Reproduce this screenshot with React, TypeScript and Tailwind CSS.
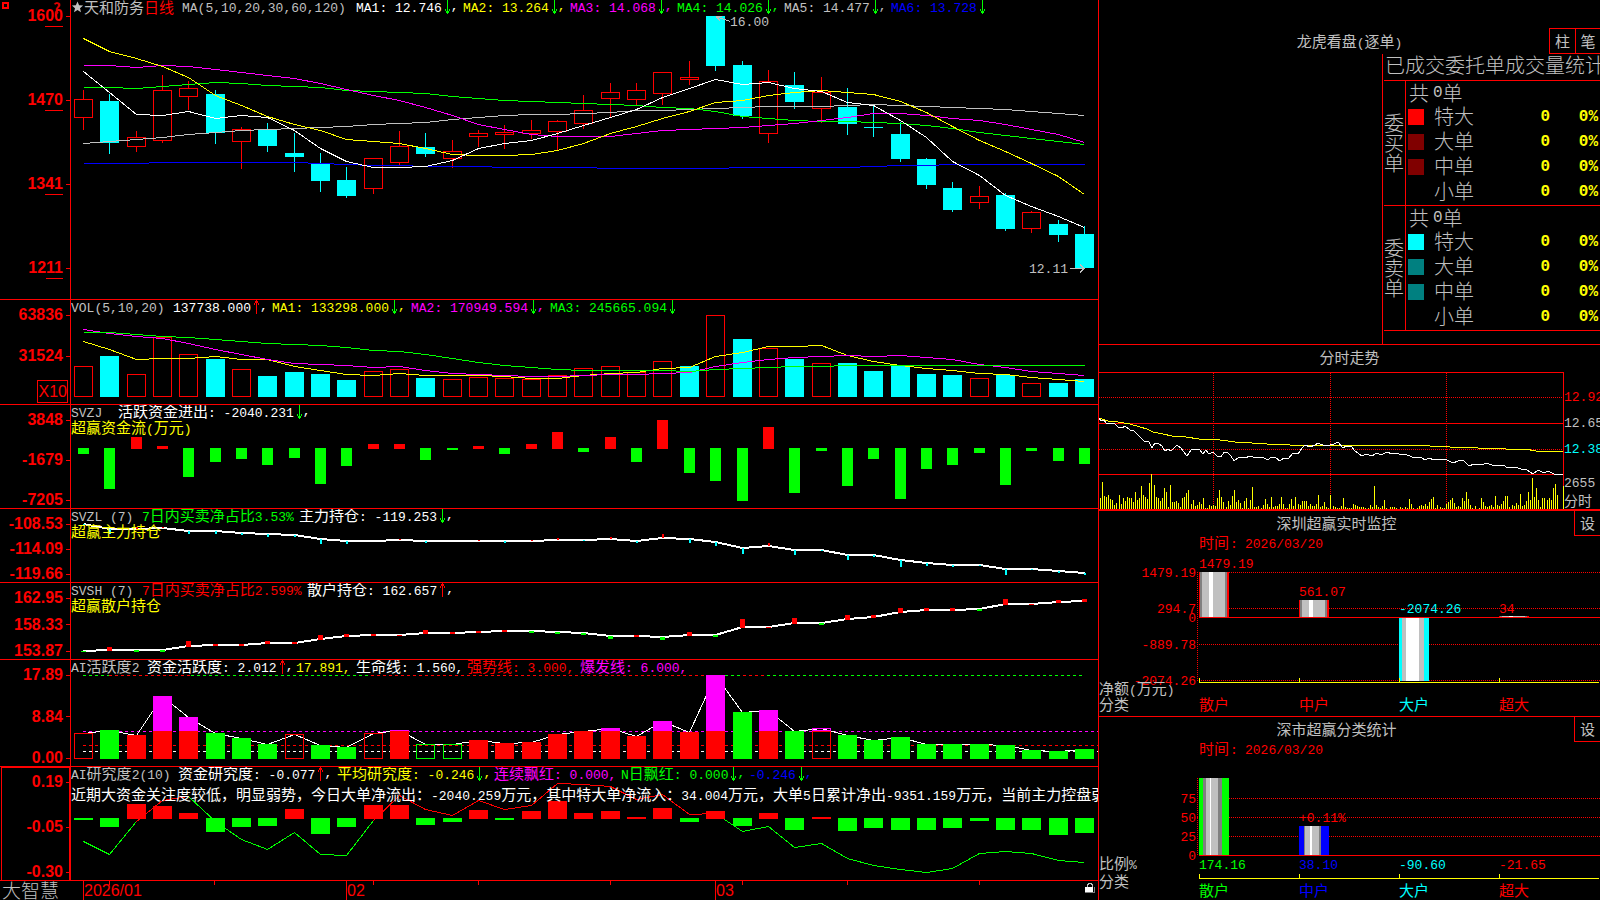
import type { ReactNode } from 'react'

type Bar = [kind: string, high: number, top: number, bottom: number, low: number]

const RED = '#ff0000'
const GREEN = '#00ff00'
const CYAN = '#00ffff'
const YELLOW = '#ffff00'
const MAGENTA = '#ff00ff'
const BLUE = '#0000ff'
const WHITE = '#ffffff'
const GRAY = '#c0c0c0'

// r = rising (hollow red), c = falling (solid cyan)
const CANDLES: Bar[] = [
  ['r', 90, 99, 117, 130], ['c', 94, 101, 143, 154], ['r', 131, 137, 146, 152], ['r', 75, 90, 140, 143],
  ['r', 81, 88, 96, 110], ['c', 90, 94, 133, 144], ['r', 127, 129, 141, 169], ['c', 123, 129, 146, 152],
  ['c', 133, 153, 157, 172], ['c', 153, 163, 181, 192], ['c', 167, 180, 196, 198], ['r', 158, 158, 188, 194],
  ['r', 131, 146, 162, 165], ['c', 133, 147, 154, 157], ['r', 140, 151, 158, 168], ['r', 130, 133, 136, 147],
  ['r', 125, 132, 134, 149], ['r', 120, 130, 133, 139], ['r', 120, 121, 131, 150], ['r', 95, 110, 123, 129],
  ['r', 83, 92, 98, 117], ['r', 83, 90, 99, 105], ['r', 72, 72, 93, 105], ['r', 61, 77, 79, 85],
  ['c', 16, 16, 66, 71], ['c', 61, 65, 116, 119], ['r', 70, 81, 133, 143], ['c', 72, 85, 102, 109],
  ['r', 77, 92, 108, 123], ['c', 88, 107, 124, 135], ['c', 105, 127, 128, 137], ['c', 122, 134, 159, 162],
  ['c', 158, 159, 185, 189], ['c', 182, 188, 210, 212], ['r', 186, 196, 202, 209], ['c', 193, 195, 229, 231],
  ['r', 211, 212, 228, 233], ['c', 220, 224, 235, 242], ['c', 226, 234, 268, 268],
]

const PRICE_LINES: [string, number[]][] = [
  [GRAY, [143, 141, 139, 137, 134, 132, 130, 129, 128, 127, 126, 124, 123, 122, 119, 117, 115, 114, 114, 113, 112, 110, 110, 109, 108, 107, 106, 106, 106, 105, 104, 105, 106, 107, 108, 109, 111, 113, 115]],
  [BLUE, [163, 163, 163, 162, 162, 162, 162, 162, 162, 163, 164, 165, 165, 166, 166, 166, 167, 167, 167, 167, 168, 168, 168, 168, 168, 167, 167, 167, 167, 167, 166, 165, 165, 164, 164, 164, 164, 164, 164]],
  [GREEN, [87, 87, 88, 86, 84, 82, 83, 85, 86, 87, 90, 91, 92, 93, 96, 98, 100, 101, 102, 103, 104, 105, 107, 108, 111, 116, 118, 120, 121, 121, 122, 123, 125, 128, 132, 135, 138, 141, 144]],
  [MAGENTA, [65, 65, 67, 65, 66, 69, 72, 75, 78, 83, 89, 95, 100, 107, 115, 124, 129, 134, 136, 136, 136, 133, 130, 129, 128, 127, 125, 123, 120, 117, 113, 113, 115, 118, 120, 124, 129, 134, 142]],
  [YELLOW, [38, 51, 58, 66, 77, 95, 105, 116, 124, 130, 139, 141, 143, 148, 154, 155, 155, 154, 150, 143, 133, 126, 118, 111, 102, 100, 95, 92, 90, 92, 94, 101, 112, 126, 140, 151, 163, 176, 194]],
  [WHITE, [71, 92, 114, 115, 111, 118, 115, 117, 130, 148, 161, 167, 167, 166, 160, 148, 143, 140, 133, 125, 117, 109, 97, 88, 79, 84, 82, 88, 91, 102, 105, 120, 137, 161, 175, 195, 206, 216, 227]],
]

const VOLUME_TOPS = [366, 356, 374, 337, 354, 359, 369, 376, 372, 374, 380, 371, 369, 378, 379, 377, 378, 379, 375, 368, 366, 372, 361, 366, 315, 339, 348, 359, 363, 363, 371, 366, 374, 375, 378, 375, 383, 383, 379]
const VOLUME_UP = 'r.rrr.r....rr.rrrrrrrrr.r.r.r.....r.r..'

const VOLUME_LINES: [string, number[]][] = [
  [YELLOW, [341, 349, 359, 358, 358, 356, 359, 359, 366, 370, 374, 375, 373, 375, 375, 375, 376, 378, 378, 375, 373, 372, 368, 367, 356, 352, 346, 346, 345, 355, 361, 365, 368, 370, 373, 374, 377, 379, 381]],
  [MAGENTA, [329, 333, 336, 338, 343, 349, 354, 359, 363, 364, 365, 367, 366, 370, 373, 374, 375, 376, 376, 375, 374, 374, 373, 372, 366, 362, 359, 357, 356, 355, 356, 355, 357, 359, 364, 367, 371, 373, 375]],
  [GREEN, [332, 332, 334, 336, 337, 339, 341, 343, 344, 345, 347, 350, 351, 354, 358, 362, 365, 367, 369, 370, 370, 370, 370, 371, 369, 368, 367, 366, 366, 365, 365, 365, 365, 365, 365, 365, 365, 365, 365]],
]

// y end of every bar; above the zero line is an inflow
const FUND_FLOW = [454, 489, 437, 446, 477, 462, 459, 465, 458, 484, 466, 444, 444, 460, 450, 446, 454, 444, 432, 452, 437, 462, 420, 473, 481, 501, 427, 493, 451, 486, 459, 499, 469, 465, 453, 485, 451, 461, 464]

const MAIN_LINE = [524, 529, 529, 528, 531, 531, 533, 534, 535, 539, 541, 541, 540, 541, 541, 541, 541, 541, 540, 540, 539, 541, 538, 539, 542, 548, 546, 550, 550, 555, 555, 560, 563, 565, 565, 569, 569, 571, 573]
const MAIN_TICKS = [-1, 5, 2, 1, 3, 3, 2, 3, 2, 5, 3, 0, 1, 2, 0, 1, 2, 1, 2, -1, 2, -2, 4, -4, -4, -6, 3, -5, -1, -5, -2, -7, -3, -2, -1, -6, -1, -2, -2]
const MAIN_UP = [2, 3, 12, 15, 17, 18, 20, 22, 26]

const RETAIL_LINE = [651, 650, 650, 650, 646, 645, 645, 643, 643, 639, 636, 635, 635, 633, 633, 632, 631, 631, 632, 633, 636, 636, 637, 635, 635, 627, 627, 623, 623, 619, 617, 612, 610, 610, 609, 604, 604, 602, 601]
const RETAIL_MARKS = [-1, 4, -2, -2, 6, 2, 2, 3, 2, 5, 3, 2, 1, 4, 2, 2, 2, -2, -2, -2, -3, 2, -3, 4, -2, 9, 1, 6, -2, 5, 3, 5, 3, 3, -2, 6, 1, 3, 3]

// g/R solid, r/o hollow
const ACTIVITY: [string, number][] = [
  ['r', 733], ['g', 730], ['R', 735], ['R', 696], ['R', 717], ['g', 733], ['g', 738], ['g', 744], ['r', 734], ['g', 745],
  ['g', 747], ['r', 733], ['R', 730], ['o', 744], ['o', 744], ['R', 740], ['R', 743], ['R', 742], ['R', 734], ['R', 731],
  ['R', 728], ['R', 736], ['R', 721], ['R', 732], ['R', 675], ['g', 712], ['R', 710], ['g', 731], ['r', 728], ['g', 735],
  ['g', 740], ['g', 737], ['g', 744], ['g', 744], ['g', 744], ['g', 745], ['g', 750], ['g', 751], ['g', 749],
]

const RESEARCH_BARS = [820, 827, 804, 806, 813, 832, 827, 826, 809, 834, 827, 805, 805, 825, 822, 810, 820, 811, 801, 813, 811, 817, 808, 822, 811, 826, 813, 830, 817, 831, 828, 830, 830, 828, 821, 830, 830, 835, 833]
const RESEARCH_LINE = [841, 854, 821, 800, 796, 821, 839, 849, 832, 854, 855, 820, 795, 809, 815, 800, 809, 805, 783, 784, 786, 799, 794, 814, 813, 831, 826, 847, 843, 858, 865, 869, 872, 868, 853, 851, 853, 860, 862]

const TICK_VOLUME = [
  11, 27, 13, 12, 14, 10, 9, 4, 6, 14, 5, 11, 8, 12, 11, 11, 7, 17, 9, 11, 23, 14, 12, 10, 26, 35, 24, 12, 11, 8, 11, 21, 17, 2, 24, 7, 7, 8, 6,
  2, 11, 12, 16, 19, 5, 9, 3, 4, 7, 5, 11, 1, 1, 4, 3, 4, 3, 11, 19, 12, 7, 2, 8, 4, 13, 19, 7, 9, 6, 1, 8, 11, 1, 9, 22, 2, 2, 3, 1,
  4, 10, 5, 2, 12, 2, 3, 3, 5, 12, 5, 1, 1, 5, 10, 3, 12, 5, 4, 8, 8, 8, 3, 5, 3, 3, 5, 14, 2, 3, 7, 2, 1, 14, 3, 2, 1, 1, 3, 11,
  2, 1, 1, 1, 5, 4, 3, 2, 2, 2, 1, 1, 4, 2, 23, 4, 2, 1, 3, 9, 1, 0, 2, 2, 2, 1, 0, 2, 1, 2, 1, 10, 5, 1, 0, 1, 3, 4, 3, 5,
  3, 7, 10, 12, 1, 4, 2, 1, 1, 5, 7, 9, 11, 6, 2, 3, 2, 11, 8, 17, 10, 4, 1, 3, 0, 1, 11, 7, 3, 2, 3, 4, 2, 13, 4, 3, 5, 8, 13, 13,
  2, 4, 3, 6, 4, 15, 3, 4, 8, 17, 9, 31, 12, 21, 9, 2, 11, 11, 9, 11, 9, 21, 25, 14, 0, 0, 23,
]
const TICK_STEP = 463 / (TICK_VOLUME.length - 1)

const PRICE_PATH =
  '1099,418 1101,421 1104,420 1107,424 1114,423 1118,427 1122,428 1125,426 1130,430 1134,431 1139,436 1144,441 1149,442 1152,448 1155,443 1158,443 1162,446 1165,451 1168,449 1171,451 1177,445 1181,448 1187,456 1191,450 1199,449 1203,454 1206,450 1209,454 1213,452 1217,456 1221,457 1224,452 1228,453 1231,456 1234,461 1239,457 1246,458 1249,456 1253,457 1263,457 1267,460 1272,457 1276,458 1280,461 1284,458 1288,459 1293,453 1298,454 1302,448 1305,445 1310,447 1315,445 1318,443 1325,446 1330,445 1334,444 1338,442 1343,448 1346,446 1351,446 1355,451 1362,456 1366,454 1372,456 1377,453 1381,455 1387,452 1392,454 1397,453 1401,455 1405,454 1412,457 1421,457 1425,460 1429,458 1434,460 1440,459 1447,460 1453,463 1458,461 1463,460 1469,466 1474,464 1481,465 1487,463 1494,466 1503,465 1508,468 1515,467 1521,469 1527,470 1533,474 1538,470 1544,473 1548,471 1554,474 1563,474'
const AVERAGE_PATH =
  '1099,418 1108,421 1118,422 1130,424 1140,427 1147,429 1153,432 1163,434 1172,436 1186,437 1199,439 1213,439 1235,442 1252,443 1267,444 1290,445 1400,445 1430,446 1450,447 1478,448 1506,449 1525,449 1536,451 1550,451 1563,452'

// left pixel of the column in the middle of candle i
const cx = (i: number) => Math.round(83 + i * 26.34)

function Line({ ys, color, width = 1 }: { ys: number[]; color: string; width?: number }) {
  // odd widths sit on pixel centres, even ones on pixel edges
  const dy = width % 2 ? 0.5 : 0
  return <polyline points={ys.map((y, i) => `${cx(i) + 0.5},${y + dy}`).join(' ')} fill="none" stroke={color} strokeWidth={width} />
}

function Box({ x, y, w, h, color, hollow }: { x: number; y: number; w: number; h: number; color: string; hollow?: boolean }) {
  return hollow
    ? <rect x={x + 0.5} y={y + 0.5} width={w - 1} height={Math.max(h - 1, 1)} fill="none" stroke={color} />
    : <rect x={x} y={y} width={w} height={h} fill={color} />
}

// Latin runs are set in the half-width mono face, the rest in the CJK face
function Mixed({ children }: { children: string }) {
  return (
    <>
      {children.split(/([\x20-\x7e]+)/).filter(Boolean).map((part, i) => (
        /^[\x20-\x7e]/.test(part)
          ? <span key={i} className="font-['Liberation_Mono',monospace] text-[13px] whitespace-pre">{part}</span>
          : <span key={i}>{part}</span>
      ))}
    </>
  )
}

function Arrow({ up }: { up?: boolean }) {
  return (
    <svg width="7" height="14" viewBox="0 0 7 14" className="ml-[2px] shrink-0" shapeRendering="crispEdges">
      {up
        ? <path d="M3.500 14V0M1.500 3v2M2.500 1v2M4.500 1v2M5.500 3v2" stroke={RED} fill="none" />
        : <path d="M3.500 0v14M1.500 9v2M2.500 11v2M4.500 11v2M5.500 9v2" stroke={GREEN} fill="none" />}
    </svg>
  )
}

interface ItemProps { className: string; text: string; arrow?: 'up' | 'down'; comma?: boolean }

function Item({ className, text, arrow, comma }: ItemProps) {
  return (
    <span className={`flex shrink-0 items-center ${className}`}>
      <span><Mixed>{text}</Mixed></span>
      {arrow && <Arrow up={arrow === 'up'} />}
      {comma && <Mixed>,</Mixed>}
    </span>
  )
}

interface PanelProps {
  top: number
  height: number
  className: string
  axis: ReactNode
  legend: ReactNode
  children: ReactNode
}

function Panel({ top, height, className, axis, legend, children }: PanelProps) {
  return (
    <section className={`flex border-b border-[#ff0000] ${className}`}>
      {axis}
      <div className="relative min-w-0 flex-1 overflow-hidden">
        <svg
          className="absolute inset-0 h-full w-full"
          viewBox={`71 ${top} 1027 ${height}`}
          preserveAspectRatio="none"
          shapeRendering="crispEdges"
        >
          {children}
        </svg>
        <div className="relative">{legend}</div>
      </div>
    </section>
  )
}

function Axis({ labels }: { labels: string[] }) {
  return (
    <div className="flex w-[71px] shrink-0 flex-col justify-between border-r border-[#ff0000] pt-[7px]">
      {labels.map((l) => <AxisLabel key={l}>{l}</AxisLabel>)}
    </div>
  )
}

function AxisLabel({ children }: { children: ReactNode }) {
  return (
    <div className="flex items-center justify-end gap-[3px] font-['Liberation_Sans',sans-serif] text-base leading-4 font-bold text-[#ff0000]">
      <span>{children}</span>
      <i className="h-px w-1 bg-[#ff0000]" />
    </div>
  )
}

function PricePanel() {
  return (
    <Panel
      top={0}
      height={299}
      className="h-[300px]"
      axis={
        <div className="relative flex w-[71px] shrink-0 flex-col justify-between border-r border-[#ff0000] pt-2 pb-[23px]">
          <i className="absolute top-[2px] left-[2px] h-[7px] w-[7px] border-2 border-[#ff0000]" />
          <b className="absolute top-0 left-[53px] z-10 text-[15px] leading-4 text-[#e00000]">?</b>
          {['1600', '1470', '1341', '1211'].map((l) => (
            <AxisLabel key={l}>
              {l.slice(0, 2)}
              <span className="border-b border-[#ff0000] pb-[2px]">{l.slice(2)}</span>
            </AxisLabel>
          ))}
        </div>
      }
      legend={
        <div className="flex h-[14px] items-center leading-[14px]">
          <span className="flex w-[111px] shrink-0 items-center text-[#c0c0c0]">
            <svg width="13" height="12" viewBox="0 0 13 12"><path fill={GRAY} d="M6.500 .5l1.600 3.800 4 .3-3.100 2.600 1 4.100-3.500-2.300L3 11.300l1-4.100L.9 4.600l4-.3z" /></svg>
            天和防务<span className="text-[#ff0000]">日线</span>
          </span>
          <Item className="w-[174px] text-[#c0c0c0]" text="MA(5,10,20,30,60,120)" />
          <Item className="w-[107px] text-white" text="MA1: 12.746" arrow="down" comma />
          <Item className="w-[107px] text-[#ffff00]" text="MA2: 13.264" arrow="down" comma />
          <Item className="w-[107px] text-[#ff00ff]" text="MA3: 14.068" arrow="down" comma />
          <Item className="w-[107px] text-[#00ff00]" text="MA4: 14.026" arrow="down" comma />
          <Item className="w-[107px] text-[#c0c0c0]" text="MA5: 14.477" arrow="down" comma />
          <Item className="w-[107px] text-[#0000ff]" text="MA6: 13.728" arrow="down" />
        </div>
      }
    >
      {CANDLES.map(([kind, high, top, bottom, low], i) => {
        const color = kind === 'r' ? RED : CYAN
        return (
          <g key={i}>
            <rect x={cx(i)} y={high} width={1} height={top - high} fill={color} />
            <rect x={cx(i)} y={bottom} width={1} height={low - bottom} fill={color} />
            <Box x={cx(i) - 9} y={top} w={19} h={bottom - top + (kind === 'r' ? 1 : 0)} color={color} hollow={kind === 'r'} />
          </g>
        )
      })}
      {PRICE_LINES.map(([color, ys]) => <Line key={color} ys={ys} color={color} />)}
      <g stroke={GRAY} fill="none">
        <path d="M716 16.500l14 5M716 16.500l4 4M716 16.500h6" />
        <path d="M1070 268.500h15M1080 264.500l4 4-4 4" />
      </g>
      <g fill={GRAY} className="font-['Liberation_Mono',monospace] text-[13px]">
        <text x="730" y="26">16.00</text>
        <text x="1029" y="273">12.11</text>
      </g>
    </Panel>
  )
}

function VolumePanel() {
  return (
    <Panel
      top={300}
      height={104}
      className="h-[105px]"
      axis={
        <div className="flex w-[71px] shrink-0 flex-col border-r border-[#ff0000] pt-[7px]">
          <AxisLabel>63836</AxisLabel>
          <div className="mt-[25px]"><AxisLabel>31524</AxisLabel></div>
          <div className="mt-4 mr-[2px] flex h-[23px] w-[31px] items-center justify-end self-end border border-[#ff0000] font-['Liberation_Sans',sans-serif] text-base text-[#ff0000]">X10</div>
        </div>
      }
      legend={
        <div className="flex h-[14px] items-center leading-[14px]">
          <Item className="w-[102px] text-[#c0c0c0]" text="VOL(5,10,20)" />
          <Item className="w-[99px] text-white" text="137738.000" arrow="up" comma />
          <Item className="w-[139px] text-[#ffff00]" text="MA1: 133298.000" arrow="down" comma />
          <Item className="w-[139px] text-[#ff00ff]" text="MA2: 170949.594" arrow="down" comma />
          <Item className="w-[139px] text-[#00ff00]" text="MA3: 245665.094" arrow="down" />
        </div>
      }
    >
      {VOLUME_TOPS.map((y, i) => {
        const up = VOLUME_UP[i] === 'r'
        return <Box key={i} x={cx(i) - 9} y={y} w={19} h={397 - y} color={up ? RED : CYAN} hollow={up} />
      })}
      {VOLUME_LINES.map(([color, ys]) => <Line key={color} ys={ys} color={color} />)}
    </Panel>
  )
}

function FundFlowPanel() {
  return (
    <Panel
      top={405}
      height={103}
      className="h-[104px]"
      axis={<Axis labels={['3848', '-1679', '-7205']} />}
      legend={
        <>
          <div className="flex h-[14px] items-center leading-[14px]">
            <Item className="w-[47px] text-[#c0c0c0]" text="SVZJ" />
            <Item className="text-white" text="活跃资金进出: -2040.231" arrow="down" comma />
          </div>
          <div className="leading-[15px] text-[#ffff00]"><Mixed>超赢资金流(万元)</Mixed></div>
        </>
      }
    >
      {FUND_FLOW.map((y, i) => (
        y < 448
          ? <Box key={i} x={cx(i) - 5} y={y} w={11} h={449 - y} color={RED} />
          : <Box key={i} x={cx(i) - 5} y={448} w={11} h={y - 448} color={GREEN} />
      ))}
    </Panel>
  )
}

function MainHoldingPanel() {
  return (
    <Panel
      top={509}
      height={73}
      className="h-[74px]"
      axis={<Axis labels={['-108.53', '-114.09', '-119.66']} />}
      legend={
        <>
          <div className="flex h-[14px] items-center leading-[14px]">
            <Item className="w-[71px] text-[#c0c0c0]" text="SVZL (7)" />
            <Item className="w-[157px] text-[#00ff00]" text="7日内买卖净占比3.53%" />
            <Item className="text-white" text="主力持仓: -119.253" arrow="down" comma />
          </div>
          <div className="leading-[15px] text-[#ffff00]">超赢主力持仓</div>
        </>
      }
    >
      <Line ys={MAIN_LINE} color={WHITE} width={2} />
      {MAIN_TICKS.map((t, i) => {
        const h = Math.abs(t)
        return MAIN_UP.includes(i)
          ? <rect key={i} x={cx(i)} y={MAIN_LINE[i] - h} width={2} height={h} fill={RED} />
          : <rect key={i} x={cx(i)} y={MAIN_LINE[i]} width={2} height={h} fill={CYAN} />
      })}
    </Panel>
  )
}

function RetailHoldingPanel() {
  return (
    <Panel
      top={583}
      height={76}
      className="h-[77px]"
      axis={<Axis labels={['162.95', '158.33', '153.87']} />}
      legend={
        <>
          <div className="flex h-[14px] items-center leading-[14px]">
            <Item className="w-[71px] text-[#c0c0c0]" text="SVSH (7)" />
            <Item className="w-[165px] text-[#ff0000]" text="7日内买卖净占比2.599%" />
            <Item className="text-white" text="散户持仓: 162.657" arrow="up" comma />
          </div>
          <div className="leading-[15px] text-[#ffff00]">超赢散户持仓</div>
        </>
      }
    >
      <Line ys={RETAIL_LINE} color={WHITE} width={2} />
      {RETAIL_MARKS.map((m, i) => (
        m > 0
          ? <rect key={i} x={cx(i) - 2} y={RETAIL_LINE[i] - m + 1} width={5} height={m} fill={RED} />
          : <rect key={i} x={cx(i) - 2} y={RETAIL_LINE[i]} width={5} height={-m} fill={GREEN} />
      ))}
    </Panel>
  )
}

function ActivityPanel() {
  return (
    <Panel
      top={660}
      height={106}
      className="h-[107px]"
      axis={<Axis labels={['17.89', '8.84', '0.00']} />}
      legend={
        <div className="flex h-[14px] items-center leading-[14px]">
          <Item className="w-[76px] text-[#c0c0c0]" text="AI活跃度2" />
          <Item className="w-[149px] text-white" text="资金活跃度: 2.012" arrow="up" comma />
          <Item className="w-[60px] text-[#ffff00]" text="17.891," />
          <Item className="w-[111px] text-white" text="生命线: 1.560," />
          <Item className="w-[113px] text-[#ff0000]" text="强势线: 3.000," />
          <Item className="text-[#ff00ff]" text="爆发线: 6.000," />
        </div>
      }
    >
      <g strokeDasharray="3 3">
        <path d="M83 675.500H109M191 675.500H371M719 675.500H743M767 675.500H1085" stroke={GREEN} />
        <path d="M109 675.500H191M371 675.500H716M743 675.500H767" stroke={RED} />
        <path d="M83 731.500H1098" stroke={MAGENTA} />
        <path d="M83 745.500H1098" stroke={RED} />
        <path d="M83 751.500H1098" stroke={WHITE} />
      </g>
      <Line ys={ACTIVITY.map(([, y]) => y)} color={WHITE} />
      {ACTIVITY.map(([kind, y], i) => {
        const hollow = kind === 'r' || kind === 'o'
        const color = kind === 'g' || kind === 'o' ? GREEN : RED
        const from = color === RED ? Math.max(y, 731) : y
        return (
          <g key={i}>
            <Box x={cx(i) - 9} y={from} w={19} h={759 - from} color={color} hollow={hollow} />
            {from > y && <Box x={cx(i) - 9} y={y} w={19} h={from - y} color={MAGENTA} hollow={hollow} />}
          </g>
        )
      })}
    </Panel>
  )
}

function ResearchPanel() {
  const seg = (from: number, to: number) =>
    RESEARCH_LINE.slice(from, to + 1).map((y, k) => `${cx(from + k) + 0.5},${y + 0.5}`).join(' ')

  return (
    <Panel
      top={767}
      height={113}
      className="h-[114px]"
      axis={
        <div className="flex w-[71px] shrink-0 border-r border-[#ff0000] pl-px">
          <div className="flex flex-1 flex-col justify-between border border-b-0 border-[#ff0000] pt-[6px] [&>div]:-mr-px">
            <AxisLabel>0.19</AxisLabel>
            <AxisLabel>-0.05</AxisLabel>
            <AxisLabel>-0.30</AxisLabel>
          </div>
        </div>
      }
      legend={
        <>
          <div className="flex h-[14px] items-center leading-[14px]">
            <Item className="w-[107px] text-[#c0c0c0]" text="AI研究度2(10)" />
            <Item className="w-[159px] text-white" text="资金研究度: -0.077" arrow="up" comma />
            <Item className="w-[157px] text-[#ffff00]" text="平均研究度: -0.246" arrow="down" comma />
            <Item className="w-[127px] text-[#ff00ff]" text="连续飘红: 0.000," />
            <Item className="w-[128px] text-[#00ff00]" text="N日飘红: 0.000" arrow="down" comma />
            <Item className="text-[#0000ff]" text="-0.246" arrow="down" comma />
          </div>
          <p className="pt-[5px] leading-4 whitespace-nowrap text-white">
            <Mixed>近期大资金关注度较低，明显弱势，今日大单净流出：-2040.259万元，其中特大单净流入：34.004万元，大单5日累计净出-9351.159万元，当前主力控盘弱</Mixed>
          </p>
        </>
      }
    >
      <g fill="none" stroke={GREEN}>
        <polyline points={seg(0, 2)} />
        <polyline points={seg(4, 11)} />
        <polyline points={seg(24, 38)} />
      </g>
      <g fill="none" stroke={RED}>
        <polyline points={seg(2, 4)} />
        <polyline points={seg(11, 24)} />
      </g>
      {RESEARCH_BARS.map((y, i) => (
        y < 818
          ? <Box key={i} x={cx(i) - 9} y={y} w={19} h={819 - y} color={RED} />
          : <Box key={i} x={cx(i) - 9} y={818} w={19} h={y - 818} color={GREEN} />
      ))}
    </Panel>
  )
}

function TimeAxis() {
  return (
    <footer className="flex h-[19px] overflow-hidden">
      <div className="w-[71px] shrink-0 pl-[2px] text-[19px] leading-[17px] font-light whitespace-nowrap text-[#c0c0c0]">
        大智慧
      </div>
      <svg
        className="h-full min-w-0 flex-1"
        viewBox="71 881 1027 19"
        preserveAspectRatio="none"
        shapeRendering="crispEdges"
      >
        <path stroke={RED} d="M83.500 881v19M346.500 881v19M715.500 881v19M109.500 881v4M214.500 881v4M373.500 881v4M478.500 881v4M610.500 881v4M742.500 881v4M847.500 881v4M979.500 881v4" />
        <g fill={RED} className="font-['Liberation_Sans',sans-serif] text-base">
          <text x="84" y="896">2026/01</text>
          <text x="347" y="896">02</text>
          <text x="716" y="896">03</text>
        </g>
        <path d="M1087.500 887v-3h1v-1h3v1h1v3" fill="none" stroke={GRAY} />
        <path d="M1085 887h8v5h-8z" fill={WHITE} />
        <path d="M1085 892.500h10M1094.500 887v6" stroke="#808080" />
      </svg>
    </footer>
  )
}

const ORDER_GROUPS = [
  { side: '委买单', rows: [['特大', 'bg-[#ff0000]'], ['大单', 'bg-[#800000]'], ['中单', 'bg-[#800000]'], ['小单', '']] },
  { side: '委卖单', rows: [['特大', 'bg-[#00ffff]'], ['大单', 'bg-[#008080]'], ['中单', 'bg-[#008080]'], ['小单', '']] },
]

function OrderStats() {
  return (
    <section className="flex h-[345px] flex-col border-b border-[#ff0000]">
      <header className="mt-7 grid h-[26px] grid-cols-[1fr_auto_1fr] text-[#c0c0c0]">
        <span />
        <h2 className="leading-[26px]"><Mixed>龙虎看盘(逐单)</Mixed></h2>
        <div className="flex justify-end">
          <button className="h-[26px] w-[26px] border border-r-0 border-[#ff0000] leading-[22px]">柱</button>
          <button className="h-[26px] w-[25px] border border-r-0 border-[#ff0000] leading-[22px]">笔</button>
        </div>
      </header>
      <div className="flex flex-1 justify-end">
        <div className="w-[218px] overflow-hidden border-l border-[#ff0000] pl-px text-xl font-light text-[#c0c0c0]">
          <h3 className="h-[26px] pl-px leading-[22px] whitespace-nowrap">已成交委托单成交量统计</h3>
          <table className="w-full border-separate border-spacing-0 border-b border-[#ff0000] leading-5">
            {ORDER_GROUPS.map(({ side, rows }) => (
              <tbody key={side}>
                <tr>
                  <th rowSpan={5} className="w-[22px] border-t border-r border-[#ff0000] p-0 leading-5 font-light">
                    <span className="block w-5">{side}</span>
                  </th>
                  <td colSpan={4} className="h-[25px] border-t border-[#ff0000] p-0 pl-[3px]">
                    <span className="flex h-[22px] items-center">
                      共<b className="pl-1 font-['Liberation_Mono',monospace] text-base leading-5">0</b>单
                    </span>
                  </td>
                </tr>
                {rows.map(([name, color]) => (
                  <tr key={name}>
                    <td className="h-[25px] w-5 p-0 pb-[2px] pl-[2px]"><span className={`block h-4 w-4 ${color}`} /></td>
                    <td className="w-[50px] p-0 pb-[3px] pl-2">{name}</td>
                    <td className="p-0 pb-px text-right font-['Liberation_Mono',monospace] text-base leading-5 font-bold text-[#ffff00]">0</td>
                    <td className="w-[50px] p-0 pr-[2px] pb-px text-right font-['Liberation_Mono',monospace] text-base leading-5 font-bold text-[#ffff00]">0%</td>
                  </tr>
                ))}
              </tbody>
            ))}
          </table>
        </div>
      </div>
    </section>
  )
}

function IntradayPanel() {
  return (
    <section className="h-[166px] border-b-2 border-[#ff0000]">
      <h2 className="h-6 text-center leading-[23px] text-[#c0c0c0]">分时走势</h2>
      <div className="flex h-[140px]">
        <svg
          className="h-full min-w-0 flex-1"
          viewBox="1099 369 465 140"
          preserveAspectRatio="none"
          shapeRendering="crispEdges"
        >
          <path stroke={RED} fill="none" d="M1099 372.500h465M1563.500 372v137M1099 423.500h465M1099 474.500h465" />
          <path stroke={RED} strokeDasharray="1 1" d="M1099 397.500h465M1099 449.500h465M1213.500 373v136M1330.500 373v136M1446.500 373v136" />
          {TICK_VOLUME.map((h, i) => <rect key={i} x={1100 + Math.round(i * TICK_STEP)} y={509 - h} width={1} height={h} fill={YELLOW} />)}
          <polyline points={AVERAGE_PATH} fill="none" stroke={YELLOW} />
          <polyline points={PRICE_PATH} fill="none" stroke={WHITE} />
        </svg>
        <div className="w-9 shrink-0 overflow-hidden pt-[21px] font-['Liberation_Mono',monospace] text-[13px] leading-4 text-[#c0c0c0]">
          <div className="text-[#ff0000]">12.92</div>
          <div className="mt-[10px]">12.65</div>
          <div className="mt-[10px] text-[#00ffff]">12.38</div>
          <div className="mt-[18px]">2655</div>
          <div className="font-['Noto_Sans_CJK_SC',sans-serif] text-[14px]">分时</div>
        </div>
      </div>
    </section>
  )
}

function SectionHead({ children }: { children: string }) {
  return (
    <header className="flex h-[25px] text-[#c0c0c0]">
      <h2 className="flex-1 text-center leading-6">{children}</h2>
      <button className="w-[26px] border-b border-l border-[#ff0000] leading-[22px]">设</button>
    </header>
  )
}

// bar drawn as a shaded cylinder: [offset, width, colour] strips
function Cylinder({ x, y, h, strips }: { x: number; y: number; h: number; strips: [number, number, string][] }) {
  return (
    <>
      {strips.map(([dx, w, color]) => <rect key={dx} x={x + dx} y={y} width={w} height={h} fill={color} />)}
    </>
  )
}

const RED_STRIPS: [number, number, string][] = [[0, 1, RED], [1, 2, '#808080'], [3, 7, GRAY], [10, 4, WHITE], [14, 12, GRAY], [26, 2, '#808080'], [28, 2, RED]]
const CYAN_STRIPS: [number, number, string][] = [[0, 3, CYAN], [3, 4, GRAY], [7, 13, WHITE], [20, 5, GRAY], [25, 5, CYAN]]
const GREEN_STRIPS: [number, number, string][] = [[0, 4, GREEN], [4, 3, '#808080'], [7, 4, GRAY], [11, 1, WHITE], [12, 7, GRAY], [19, 4, '#808080'], [23, 7, GREEN]]
const BLUE_STRIPS: [number, number, string][] = [[0, 5, BLUE], [5, 1, '#808080'], [6, 5, GRAY], [11, 2, WHITE], [13, 7, GRAY], [20, 2, '#808080'], [22, 8, BLUE]]

const NUM = "font-['Liberation_Mono',monospace] text-[13px]"

function MonitorPanel() {
  return (
    <section className="border-b border-[#ff0000]">
      <SectionHead>深圳超赢实时监控</SectionHead>
      <svg className="block h-[180px] w-full" viewBox="1099 536 501 180" preserveAspectRatio="xMinYMin meet" shapeRendering="crispEdges">
        <path stroke={RED} strokeDasharray="1 1" d="M1197 572.500h403M1197 608.500h403M1197 644.500h403M1197 680.500h403M1197.500 572v108" />
        <path stroke={RED} d="M1199 617.500h401" />
        <Cylinder x={1199} y={572} h={45} strips={RED_STRIPS} />
        <Cylinder x={1299} y={600} h={17} strips={RED_STRIPS} />
        <Cylinder x={1399} y={618} h={63} strips={CYAN_STRIPS} />
        <Cylinder x={1499} y={616} h={1} strips={RED_STRIPS} />
        <path stroke={YELLOW} fill="none" d="M1199 682.500h400M1199.500 678v4M1299.500 678v4M1399.500 678v4M1499.500 678v4" />
        <g fill={RED}>
          <text x="1199" y="548">时间</text>
          <g className={NUM}>
            <text x="1230" y="548">:</text>
            <text x="1245" y="548">2026/03/20</text>
            <text x="1199" y="568">1479.19</text>
            <text x="1299" y="596">561.07</text>
            <text x="1399" y="613" fill={CYAN}>-2074.26</text>
            <text x="1499" y="613">34</text>
            <g textAnchor="end">
              <text x="1196" y="577">1479.19</text>
              <text x="1196" y="613">294.7</text>
              <text x="1196" y="622">0</text>
              <text x="1196" y="649">-889.78</text>
              <text x="1196" y="685">-2074.26</text>
            </g>
          </g>
          <text x="1199" y="710">散户</text>
          <text x="1299" y="710">中户</text>
          <text x="1399" y="710" fill={CYAN}>大户</text>
          <text x="1499" y="710">超大</text>
        </g>
        <g fill={GRAY}>
          <text x="1099" y="694">净额<tspan className={NUM}>(</tspan>万元<tspan className={NUM}>)</tspan></text>
          <text x="1099" y="710">分类</text>
        </g>
      </svg>
    </section>
  )
}

function CategoryPanel() {
  return (
    <section>
      <SectionHead>深市超赢分类统计</SectionHead>
      <svg className="block h-[158px] w-full" viewBox="1099 742 501 158" preserveAspectRatio="xMinYMin meet" shapeRendering="crispEdges">
        <path stroke={RED} strokeDasharray="1 1" d="M1197 798.500h403M1197 817.500h403M1197 836.500h403M1197.500 778v77" />
        <path stroke={RED} d="M1199 855.500h401" />
        <Cylinder x={1199} y={778} h={77} strips={GREEN_STRIPS} />
        <Cylinder x={1299} y={826} h={29} strips={BLUE_STRIPS} />
        <path stroke={YELLOW} fill="none" d="M1199 878.500h400M1199.500 874v4M1299.500 874v4M1399.500 874v4M1499.500 874v4" />
        <g fill={RED}>
          <text x="1199" y="754">时间</text>
          <g className={NUM}>
            <text x="1230" y="754">:</text>
            <text x="1245" y="754">2026/03/20</text>
            <text x="1299" y="822">+0.11%</text>
            <text x="1199" y="869" fill={GREEN}>174.16</text>
            <text x="1299" y="869" fill={BLUE}>38.10</text>
            <text x="1399" y="869" fill={CYAN}>-90.60</text>
            <text x="1499" y="869">-21.65</text>
            <g textAnchor="end">
              <text x="1196" y="803">75</text>
              <text x="1196" y="822">50</text>
              <text x="1196" y="841">25</text>
              <text x="1196" y="860">0</text>
            </g>
          </g>
          <text x="1199" y="896" fill={GREEN}>散户</text>
          <text x="1299" y="896" fill={BLUE}>中户</text>
          <text x="1399" y="896" fill={CYAN}>大户</text>
          <text x="1499" y="896">超大</text>
        </g>
        <g fill={GRAY}>
          <text x="1099" y="869">比例<tspan className={NUM}>%</tspan></text>
          <text x="1099" y="887">分类</text>
        </g>
      </svg>
    </section>
  )
}

export default function App() {
  return (
    <div className="grid min-h-screen grid-cols-[minmax(0,1fr)_501px] content-start overflow-hidden bg-black font-['Noto_Sans_CJK_SC',sans-serif] text-[15px] leading-4">
      <main className="min-w-0 border-r border-[#ff0000]">
        <PricePanel />
        <VolumePanel />
        <FundFlowPanel />
        <MainHoldingPanel />
        <RetailHoldingPanel />
        <ActivityPanel />
        <ResearchPanel />
        <TimeAxis />
      </main>
      <aside className="min-w-0">
        <OrderStats />
        <IntradayPanel />
        <MonitorPanel />
        <CategoryPanel />
      </aside>
    </div>
  )
}
